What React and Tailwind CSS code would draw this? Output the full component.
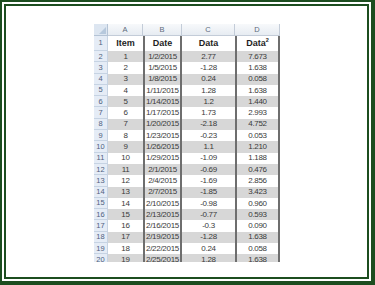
import React from "react";

const rows = [
  ["1", "1/2/2015", "2.77", "7.673"],
  ["2", "1/5/2015", "-1.28", "1.638"],
  ["3", "1/8/2015", "0.24", "0.058"],
  ["4", "1/11/2015", "1.28", "1.638"],
  ["5", "1/14/2015", "1.2", "1.440"],
  ["6", "1/17/2015", "1.73", "2.993"],
  ["7", "1/20/2015", "-2.18", "4.752"],
  ["8", "1/23/2015", "-0.23", "0.053"],
  ["9", "1/26/2015", "1.1", "1.210"],
  ["10", "1/29/2015", "-1.09", "1.188"],
  ["11", "2/1/2015", "-0.69", "0.476"],
  ["12", "2/4/2015", "-1.69", "2.856"],
  ["13", "2/7/2015", "-1.85", "3.423"],
  ["14", "2/10/2015", "-0.98", "0.960"],
  ["15", "2/13/2015", "-0.77", "0.593"],
  ["16", "2/16/2015", "-0.3", "0.090"],
  ["17", "2/19/2015", "-1.28", "1.638"],
  ["18", "2/22/2015", "0.24", "0.058"],
  ["19", "2/25/2015", "1.28", "1.638"],
];

const W = {
  n: "w-[14px]",
  a: "w-[35px]",
  b: "w-[39px]",
  c: "w-[53px]",
  d: "w-[45px]",
};

function LetterRow() {
  const cell =
    "flex items-center justify-center border-r border-b border-[#c3ccd8] bg-gradient-to-b from-[#f7f9fb] to-[#e7ecf2] text-[#5d6b7c]";
  return (
    <div className="flex h-[12px] text-[7.5px]">
      <div className={`${W.n} relative border-r border-b border-[#b4c3d5] bg-[#dde6f1]`}>
        <div className="absolute bottom-[1px] right-[1px] h-0 w-0 border-b-[7px] border-l-[7px] border-b-[#b6c8dc] border-l-transparent" />
      </div>
      <div className={`${W.a} ${cell}`}>A</div>
      <div className={`${W.b} ${cell}`}>B</div>
      <div className={`${W.c} ${cell}`}>C</div>
      <div className={`${W.d} ${cell}`}>D</div>
    </div>
  );
}

function Row({ num, cells, height, gray, bold }) {
  const bg = gray ? "bg-[#d7d7d7]" : "bg-white";
  const txt = bold
    ? "text-[9px] font-bold text-[#1e1e1e]"
    : "text-[8px] tracking-[-0.3px] text-[#3a3a3a]";
  return (
    <div className={`flex ${height}`}>
      <div
        className={`${W.n} flex items-center justify-center border-r border-b border-[#c6d3e3] bg-[#e5ecf6] text-[7.5px] text-[#4f6180]`}
      >
        {num}
      </div>
      <div className={`${W.a} ${bg} ${txt} flex items-center justify-center`}>
        {cells[0]}
      </div>
      <div
        className={`${W.b} ${bg} ${txt} flex items-center justify-center whitespace-nowrap border-x-2 border-[#6e6e6e]`}
      >
        {cells[1]}
      </div>
      <div className={`${W.c} ${bg} ${txt} flex items-center justify-center`}>
        {cells[2]}
      </div>
      <div
        className={`${W.d} ${bg} ${txt} flex items-center justify-center border-x-2 border-[#6e6e6e]`}
      >
        {cells[3]}
      </div>
    </div>
  );
}

export default function App() {
  return (
    <div
      className="h-[285px] w-[375px] bg-white"
      style={{ fontFamily: '"Liberation Sans", Arial, sans-serif' }}
    >
      <div className="h-full w-full border-t-2 border-l-2 border-r-[4px] border-b-[4px] border-[#1c4d1f] p-[2px]">
        <div className="h-full w-full border-2 border-[#1c4d1f] bg-white">
          <div className="flex justify-center pt-[18px] pl-[1px]">
            <div className="h-[238px] w-[186px] overflow-hidden">
              <LetterRow />
              <Row
                num="1"
                cells={[
                  "Item",
                  "Date",
                  "Data",
                  <span key="d">
                    Data<sup className="relative -top-[4px] text-[5.5px]">2</sup>
                  </span>,
                ]}
                height="h-[15px]"
                gray={false}
                bold
              />
              {rows.map((r, i) => (
                <Row
                  key={i}
                  num={String(i + 2)}
                  cells={r}
                  height="h-[11.3px]"
                  gray={i % 2 === 0}
                />
              ))}
            </div>
          </div>
        </div>
      </div>
    </div>
  );
}
